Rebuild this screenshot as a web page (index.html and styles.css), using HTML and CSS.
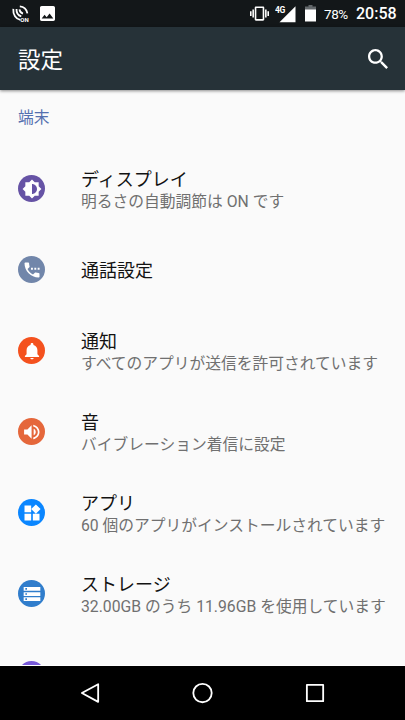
FILE: index.html
```html
<!DOCTYPE html>
<html lang="ja">
<head>
<meta charset="utf-8">
<title>設定</title>
<link rel="stylesheet" href="styles.css">
</head>
<body>
<div class="screen">
  <div class="status">
    <svg class="nfc" viewBox="0 0 18 18" fill="none" stroke="#fff" stroke-width="1.8">
      <path d="M1.300 3.800C.8 9.500 4 14 8.300 14.800M4.500 4C4.300 7.800 6.300 10.500 9.300 11.400M7.500 4.300C7.700 6.500 9 8 11 8.600M7.800 1.300C11.800 1.600 14.600 4.200 15.400 8.300"/>
      <text x="8.300" y="17">ON</text>
    </svg>
    <svg class="photo" viewBox="3 3 18 18" fill="#fff"><path d="M21 19V5c0-1.100-.9-2-2-2H5c-1.100 0-2 .9-2 2v14c0 1.100.9 2 2 2h14c1.100 0 2-.9 2-2zM8.500 13.500l2.500 3.010L14.500 12l4.500 6H5l3.500-4.500z"/></svg>
    <span class="spacer"></span>
    <svg class="vibrate" viewBox="0 0 24 24" fill="#fff"><path d="M0 15h2V9H0v6zm3 2h2V7H3v10zm19-8v6h2V9h-2zm-3 8h2V7h-2v10zM16.500 3h-9C6.670 3 6 3.670 6 4.500v15c0 .83.67 1.500 1.500 1.500h9c.83 0 1.500-.67 1.500-1.500v-15c0-.83-.67-1.500-1.500-1.500zM16 19H8V5h8v14z"/></svg>
    <svg class="signal" viewBox="0 0 21 18"><path d="M20.500 1.200v16h-16z" fill="#fff"/><text x="0" y="8.300">4G</text></svg>
    <svg class="battery" viewBox="0 0 11 17"><path d="M3.500 0h4v1.500H11V5H0V1.500h3.500z" fill="#62676a"/><path d="M0 4.500h11V16.500H0z" fill="#fff"/></svg>
    <span class="percent">78%</span>
    <span class="clock">20:58</span>
  </div>
  <header class="toolbar">
    <h1>設定</h1>
    <svg class="search" viewBox="3 3 17.490 17.490" fill="#fff"><path d="M15.500 14h-.79l-.28-.27C15.410 12.590 16 11.110 16 9.500 16 5.910 13.090 3 9.500 3S3 5.910 3 9.500 5.910 16 9.500 16c1.610 0 3.090-.59 4.230-1.570l.27.28v.79l5 4.990L20.490 19l-4.990-5zm-6 0C7.010 14 5 11.990 5 9.500S7.010 5 9.500 5 14 7.010 14 9.500 11.990 14 9.500 14z"/></svg>
  </header>
  <main class="list">
    <h2>端末</h2>
    <div class="row">
      <span class="icon display"><svg viewBox="0 0 24 24"><path fill-rule="evenodd" d="M20 8.690V4h-4.690L12 .69 8.690 4H4v4.690L.69 12 4 15.310V20h4.690L12 23.310 15.310 20H20v-4.690L23.310 12 20 8.690zM12 18V6c3.310 0 6 2.690 6 6s-2.690 6-6 6z"/></svg></span>
      <div class="text"><div class="title">ディスプレイ</div><div class="summary">明るさの自動調節は ON です</div></div>
    </div>
    <div class="row">
      <span class="icon call"><svg viewBox="0 0 24 24"><path d="M20 15.500c-1.250 0-2.450-.2-3.570-.57-.35-.11-.74-.03-1.020.24l-2.200 2.200c-2.830-1.440-5.150-3.750-6.590-6.580l2.200-2.210c.28-.27.360-.66.250-1.010C8.700 6.450 8.500 5.250 8.500 4c0-.55-.45-1-1-1H4c-.55 0-1 .45-1 1 0 9.390 7.610 17 17 17 .55 0 1-.45 1-1v-3.500c0-.55-.45-1-1-1zM10.800 9.300h2.300v2.300h-2.300zM14.800 9.300h2.300v2.300h-2.300zM18.800 9.300h2.300v2.300h-2.300z"/></svg></span>
      <div class="text single"><div class="title">通話設定</div></div>
    </div>
    <div class="row">
      <span class="icon notify"><svg viewBox="0 0 24 24"><path d="M12 22c1.100 0 2-.7 2-1.500h-4c0 .8.890 1.500 2 1.500zm6.500-6v-5c0-3.070-1.640-5.640-4.800-6.320V4c0-.83-.87-1.500-1.700-1.500s-1.700.67-1.700 1.500v.68C7.130 5.360 5.500 7.920 5.500 11v5l-2 2v1.200h17V18l-2-2z"/></svg></span>
      <div class="text"><div class="title">通知</div><div class="summary">すべてのアプリが送信を許可されています</div></div>
    </div>
    <div class="row">
      <span class="icon sound"><svg viewBox="0 0 24 24"><path d="M2.500 9v6h4l5 5V4l-5 5h-4zM16.500 12c0-1.770-1.020-3.290-2.500-4.030v8.050c1.480-.73 2.500-2.250 2.500-4.020zM13.500 3.230v2.060c3.200.86 5.500 3.540 5.500 6.710s-2.300 5.850-5.500 6.710v2.060c4.300-.91 7.500-4.490 7.500-8.770s-3.200-7.860-7.500-8.770z"/></svg></span>
      <div class="text"><div class="title">音</div><div class="summary">バイブレーション着信に設定</div></div>
    </div>
    <div class="row">
      <span class="icon apps"><svg viewBox="0 0 24 24"><path d="M13 13v8h8v-8h-8zM3 21h8v-8H3v8zM3 3v8h8V3H3zm13.660-1.310L11 7.340 16.660 13l5.660-5.660-5.660-5.650z"/></svg></span>
      <div class="text"><div class="title">アプリ</div><div class="summary">60 個のアプリがインストールされています</div></div>
    </div>
    <div class="row">
      <span class="icon storage"><svg viewBox="0 0 24 24"><path d="M2 20.500h20v-4.500H2v4.500zM4 17.200h2v2H4v-2zM2 3.500v4.500h20V3.500H2zM6 6.800H4v-2h2v2zM2 14.250h20v-4.500H2v4.500zM4 11h2v2H4v-2z" fill-rule="evenodd"/></svg></span>
      <div class="text"><div class="title">ストレージ</div><div class="summary">32.00GB のうち 11.96GB を使用しています</div></div>
    </div>
    <div class="row"><span class="icon next"></span></div>
  </main>
  <nav class="nav">
    <svg viewBox="0 0 24 24"><path d="M20 2.300v18.400L3 11.500z"/></svg>
    <svg viewBox="0 0 24 24"><circle cx="12" cy="11.500" r="9.600"/></svg>
    <svg viewBox="0 0 24 24"><path d="M3 3h17v17H3z"/></svg>
  </nav>
</div>
</body>
</html>
```
FILE: styles.css
```css
* { box-sizing: border-box; }
body { margin: 0; background: #000; font-family: Roboto, "Noto Sans CJK JP", sans-serif; }
h1, h2 { margin: 0; font-weight: 400; }
svg { display: block; flex: none; }
.screen { display: flex; flex-direction: column; width: 405px; height: 720px; overflow: hidden; }
.status { display: flex; align-items: center; height: 27px; flex: none; padding: 0 9px 0 12px; background: #131719; color: #fff; }
.nfc { width: 18px; height: 18px; margin-right: 10px; overflow: visible; }
.nfc text { font: 700 6px Roboto, sans-serif; fill: #fff; stroke: none; }
.photo { width: 15px; height: 15px; }
.spacer { flex: 1; }
.vibrate { width: 21px; height: 19px; margin-right: 5px; }
.signal { width: 21px; height: 18px; margin-right: 9px; }
.signal text { font: 700 8.500px Roboto, sans-serif; fill: #fff; letter-spacing: -.4px; }
.battery { width: 11px; height: 17px; margin-right: 8px; }
.percent { width: 25px; margin-right: 7px; padding-top: 1px; font-size: 13.500px; line-height: 26px; white-space: nowrap; letter-spacing: -.4px; }
.clock { width: 40px; padding-top: 1px; font-size: 16px; line-height: 26px; font-weight: 500; white-space: nowrap; }
.toolbar { display: flex; align-items: center; justify-content: space-between; height: 63px; flex: none; padding: 0 17px 0 18px; background: #263238; color: #fff; box-shadow: 0 1px 3px rgba(0,0,0,.45); z-index: 1; }
.toolbar h1 { padding-top: 2px; font-size: 22.500px; line-height: 32px; }
.search { width: 20px; height: 20px; }
.list { flex: 1; min-height: 0; overflow: hidden; background: #fafafa; border-bottom: 1px solid #fff; }
.list h2 { height: 58px; padding: 16px 18px 0; font-size: 15.750px; line-height: 24px; color: #5470b0; }
.row { display: flex; align-items: center; height: 81px; padding-left: 18px; }
.icon { display: flex; align-items: center; justify-content: center; flex: none; width: 27px; height: 27px; margin-right: 36px; border-radius: 50%; }
.icon svg { width: 20px; height: 20px; fill: #fff; }
.display { background: #6653a5; }
.call { background: #7186aa; }
.notify { background: #f4511e; }
.sound { background: #e5673b; }
.apps { background: #0a86ff; }
.storage { background: #307dcc; }
.next { background: #7759d8; }
.text { padding-top: 1px; white-space: nowrap; }
.single { padding-top: 2px; }
.title { font-size: 18px; line-height: 25px; color: #121212; }
.summary { font-size: 15.750px; line-height: 20px; color: #707070; }
.nav { display: flex; align-items: center; justify-content: center; gap: 89.500px; height: 54px; flex: none; background: #000; }
.nav svg { width: 23px; height: 23px; fill: none; stroke: #fff; stroke-width: 1.900; stroke-linejoin: round; }
```
